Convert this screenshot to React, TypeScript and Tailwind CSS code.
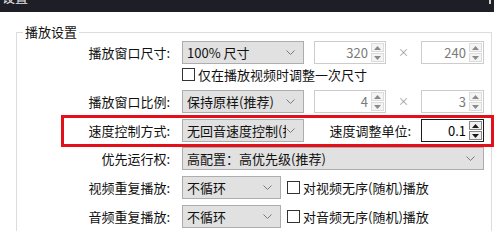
import React from "react";

const FONT = { fontFamily: '"Noto Sans CJK SC", "Noto Sans", sans-serif' };

function Chevron() {
	return (
		<svg width="9" height="5" viewBox="0 0 9 5" className="shrink-0">
			<path d="M0.5 0.5 L4.5 4.5 L8.5 0.5" fill="none" stroke="#7a7a7a" strokeWidth="1" />
		</svg>
	);
}

function Combo({ text, width }: { text: string; width: string }) {
	return (
		<div
			className={`${width} h-[23px] flex items-center justify-between border border-[#adadad] bg-[#e1e1e1] pl-[4px] pr-[8px] overflow-hidden`}
		>
			<span className="whitespace-nowrap overflow-hidden leading-[21px]">{text}</span>
			<Chevron />
		</div>
	);
}

function Arrow({ up, color }: { up: boolean; color: string }) {
	return (
		<svg width="7" height="4" viewBox="0 0 7 4">
			<path d={up ? "M0 4 L3.5 0 L7 4 Z" : "M0 0 L3.5 4 L7 0 Z"} fill={color} />
		</svg>
	);
}

function Spin({ value, width, active }: { value: string; width: string; active?: boolean }) {
	const arrow = active ? "#1a1a1a" : "#8a8a8a";
	const btn = active ? "border-[#888] bg-[#f0f0f0]" : "border-[#dcdcdc] bg-[#f4f4f4]";
	return (
		<div
			className={`${width} h-[23px] flex bg-white border ${
				active ? "border-[#1a1a1a]" : "border-[#cccccc]"
			}`}
		>
			<span
				className={`flex-1 text-right pr-[3px] leading-[21px] ${
					active ? "text-black" : "text-[#7a7a7a]"
				}`}
			>
				{value}
			</span>
			<div className="w-[14px] flex flex-col gap-[1px] py-[1px] pr-[1px]">
				<div className={`flex-1 flex items-center justify-center border ${btn}`}>
					<Arrow up color={arrow} />
				</div>
				<div className={`flex-1 flex items-center justify-center border ${btn}`}>
					<Arrow up={false} color={arrow} />
				</div>
			</div>
		</div>
	);
}

function Check({ label }: { label: string }) {
	return (
		<div className="flex items-center gap-[3px]">
			<span className="w-[13px] h-[13px] border border-[#333] bg-white shrink-0" />
			<span className="whitespace-nowrap">{label}</span>
		</div>
	);
}

function Label({ text, width }: { text: string; width: string }) {
	return <span className={`${width} text-right leading-[23px] whitespace-nowrap shrink-0`}>{text}</span>;
}

export default function App() {
	return (
		<div
			className="w-[494px] h-[231px] bg-white overflow-hidden text-[13px] text-[#111]"
			style={FONT}
		>
			{/* window title bar, mostly scrolled off the top */}
			<div className="h-[12px] bg-[#1e1e26] flex justify-between items-start overflow-hidden">
				<span className="text-[#e8e8e8] text-[13px] leading-[13px] -mt-[10px] pl-[2px]">设置</span>
				<span className="w-[2px] h-[4px] bg-[#cfcfcf] mr-[3px]" />
			</div>

			<fieldset className="mt-[11px] ml-[16px] mr-[2px] border border-[#dcdcdc] pb-[10px]">
				<legend className="ml-[6px] px-[2px] leading-[18px] text-[13px]">播放设置</legend>

				<div className="flex h-[23px]">
					<Label text="播放窗口尺寸:" width="w-[153px]" />
					<div className="ml-[12px] flex">
						<Combo text="100% 尺寸" width="w-[122px]" />
						<div className="ml-[10px]">
							<Spin value="320" width="w-[72px]" />
						</div>
						<span className="w-[35px] text-center leading-[23px] text-[#9a9a9a] text-[11px]">×</span>
						<Spin value="240" width="w-[63px]" />
					</div>
				</div>

				<div className="flex h-[21px] items-center pl-[165px]">
					<Check label="仅在播放视频时调整一次尺寸" />
				</div>

				<div className="flex h-[23px] mt-[5px]">
					<Label text="播放窗口比例:" width="w-[153px]" />
					<div className="ml-[12px] flex">
						<Combo text="保持原样(推荐)" width="w-[122px]" />
						<div className="ml-[10px]">
							<Spin value="4" width="w-[72px]" />
						</div>
						<span className="w-[35px] text-center leading-[23px] text-[#9a9a9a] text-[11px]">×</span>
						<Spin value="3" width="w-[63px]" />
					</div>
				</div>

				<div className="mt-[2px] ml-[44px] -mr-[3px] h-[32px] border-[3px] border-[#e3101a] pt-[1px]">
					<div className="flex h-[23px]">
						<Label text="速度控制方式:" width="w-[106px]" />
						<div className="ml-[12px] flex">
							<Combo text="无回音速度控制(推荐)" width="w-[122px]" />
							<Label text="速度调整单位:" width="w-[107px]" />
							<div className="ml-[10px]">
								<Spin value="0.1" width="w-[63px]" active />
							</div>
						</div>
					</div>
				</div>

				<div className="flex h-[23px]">
					<Label text="优先运行权:" width="w-[153px]" />
					<div className="ml-[12px] flex">
						<Combo text="高配置：高优先级(推荐)" width="w-[302px]" />
					</div>
				</div>

				<div className="flex h-[23px] mt-[6px]">
					<Label text="视频重复播放:" width="w-[153px]" />
					<div className="ml-[12px] flex items-center gap-[6px]">
						<Combo text="不循环" width="w-[99px]" />
						<Check label="对视频无序(随机)播放" />
					</div>
				</div>

				<div className="flex h-[23px] mt-[6px]">
					<Label text="音频重复播放:" width="w-[153px]" />
					<div className="ml-[12px] flex items-center gap-[6px]">
						<Combo text="不循环" width="w-[99px]" />
						<Check label="对音频无序(随机)播放" />
					</div>
				</div>
			</fieldset>
		</div>
	);
}
